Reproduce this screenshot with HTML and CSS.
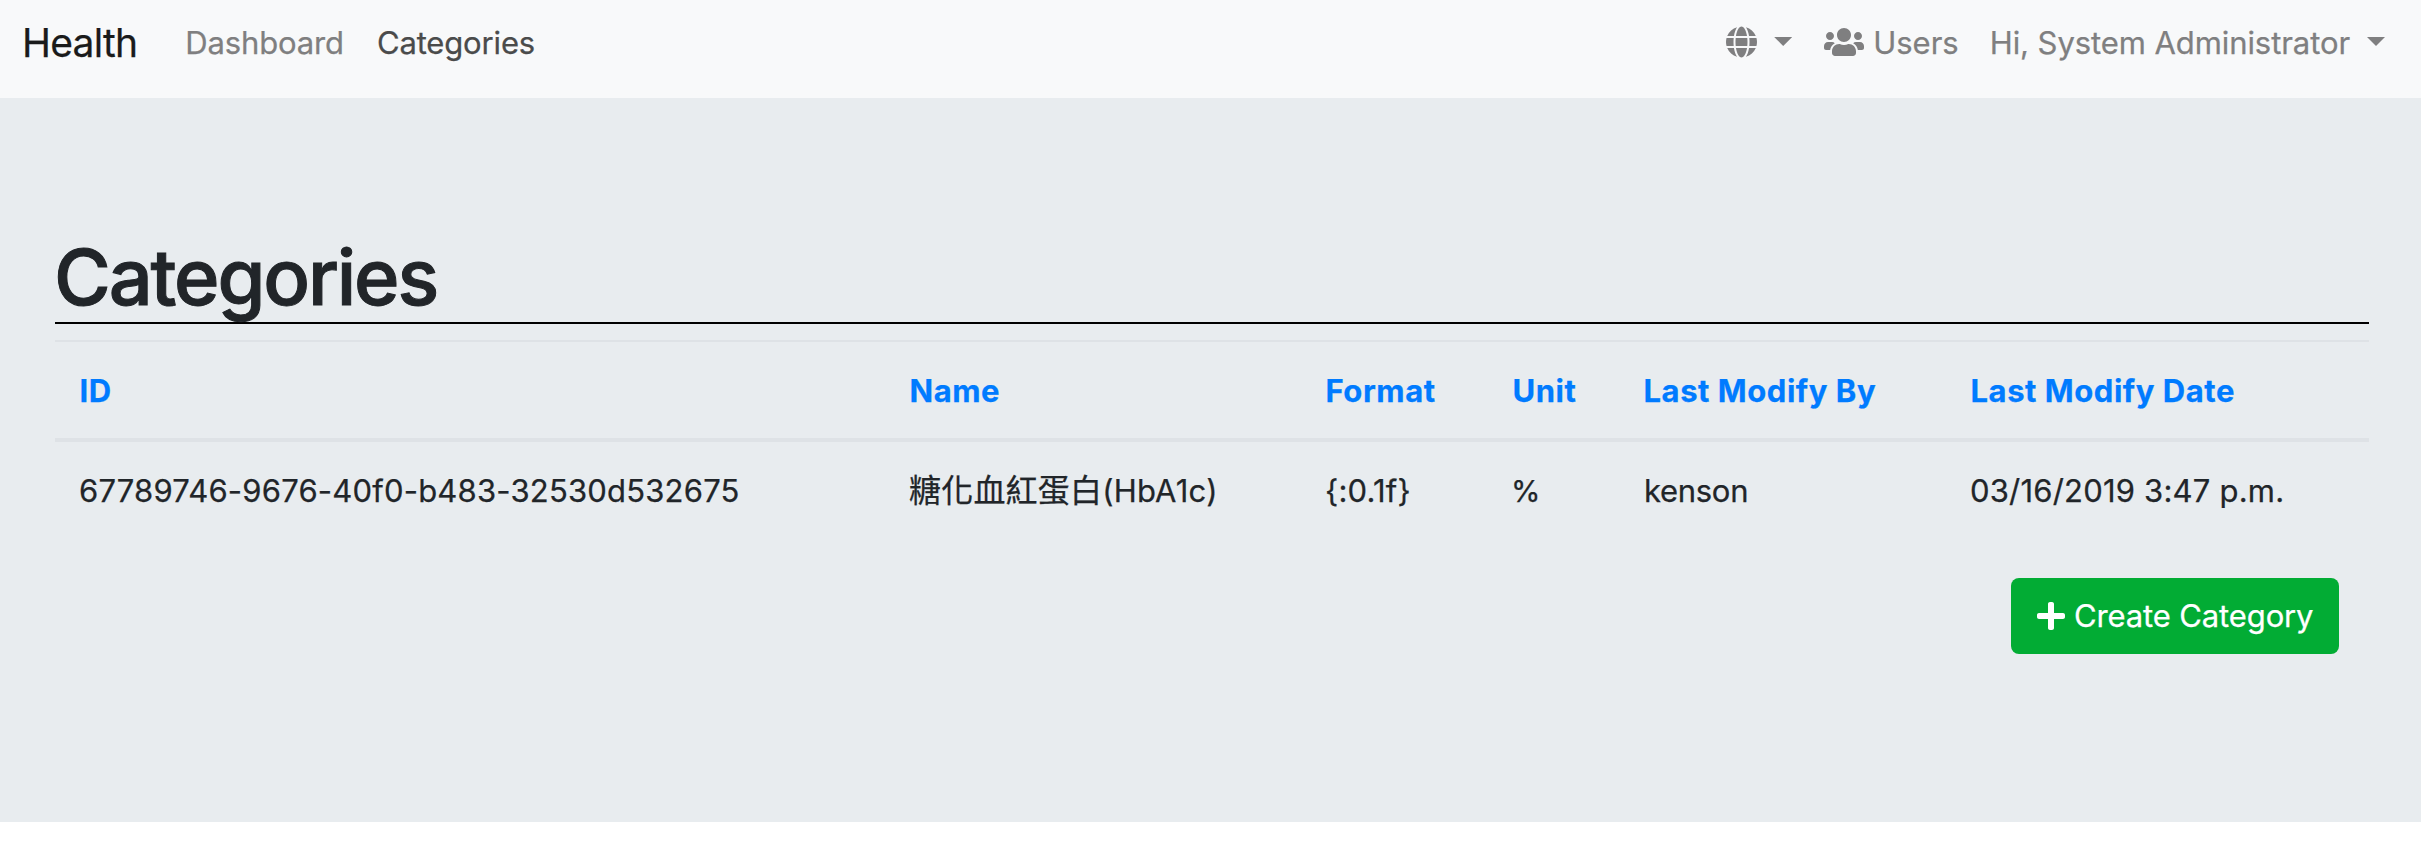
FILE: index.html
```html
<!DOCTYPE html>
<html lang="en">
<head>
<meta charset="utf-8">
<title>Health</title>
<link rel="stylesheet" href="styles.css">
</head>
<body>
<nav class="navbar">
  <a class="brand">Health</a>
  <a class="nav-link dashboard">Dashboard</a>
  <a class="nav-link active">Categories</a>
  <div class="nav-right">
    <a class="nav-link lang">
      <svg class="globe" viewBox="0 0 496 512"><path d="M336.500 160C322 70.700 287.800 8 248 8s-74 62.700-88.500 152h177zM152 256c0 22.200 1.200 43.500 3.300 64h185.300c2.100-20.500 3.300-41.800 3.300-64s-1.200-43.500-3.300-64H155.300c-2.100 20.500-3.300 41.800-3.300 64zm324.700-96c-28.600-67.900-86.500-120.400-158-141.600 24.400 33.800 41.200 84.700 50 141.600h108zM177.200 18.400C105.800 39.600 47.800 92.100 19.300 160h108c8.700-56.900 25.500-107.800 49.900-141.600zM487.400 192H372.700c2.100 21 3.300 42.500 3.300 64s-1.200 43-3.300 64h114.600c5.500-20.500 8.600-41.800 8.600-64s-3.100-43.500-8.500-64zM120 256c0-21.500 1.200-43 3.300-64H8.600C3.200 212.500 0 233.800 0 256s3.200 43.500 8.600 64h114.600c-2-21-3.200-42.500-3.200-64zm39.500 96c14.500 89.300 48.700 152 88.500 152s74-62.700 88.500-152h-177zm159.300 141.600c71.400-21.200 129.400-73.700 158-141.600h-108c-8.800 56.900-25.600 107.800-50 141.600zM19.300 352c28.600 67.900 86.500 120.400 158 141.600-24.400-33.800-41.200-84.700-50-141.600h-108z"/></svg>
      <i class="caret"></i>
    </a>
    <a class="nav-link users">
      <svg class="people" viewBox="0 0 640 512"><path d="M96 224c35.300 0 64-28.700 64-64s-28.700-64-64-64-64 28.700-64 64 28.700 64 64 64zm448 0c35.300 0 64-28.700 64-64s-28.700-64-64-64-64 28.700-64 64 28.700 64 64 64zm32 32h-64c-17.600 0-33.500 7.100-45.100 18.600 40.300 22.100 68.900 62 75.100 109.400h66c17.700 0 32-14.300 32-32v-32c0-35.300-28.700-64-64-64zm-256 0c61.900 0 112-50.100 112-112S381.900 32 320 32 208 82.100 208 144s50.100 112 112 112zm76.800 32h-8.300c-20.800 10-43.900 16-68.500 16s-47.600-6-68.500-16h-8.300C179.600 288 128 339.600 128 403.200V432c0 26.500 21.500 48 48 48h288c26.500 0 48-21.500 48-48v-28.800c0-63.600-51.600-115.200-115.200-115.200zm-223.700-13.400C161.500 263.100 145.600 256 128 256H64c-35.300 0-64 28.700-64 64v32c0 17.700 14.300 32 32 32h65.900c6.300-47.400 34.900-87.300 75.200-109.400z"/></svg>
      <span>Users</span>
    </a>
    <a class="nav-link account"><span class="greeting">Hi, System Administrator</span><i class="caret"></i></a>
  </div>
</nav>
<main class="page">
  <h1 class="title">Categories</h1>
  <table class="table">
    <colgroup><col class="c-id"><col class="c-name"><col class="c-format"><col class="c-unit"><col class="c-by"><col class="c-date"></colgroup>
    <thead><tr><th>ID</th><th>Name</th><th>Format</th><th>Unit</th><th>Last Modify By</th><th>Last Modify Date</th></tr></thead>
    <tbody><tr><td>67789746-9676-40f0-b483-32530d532675</td><td><span class="cjk" lang="zh-Hant">糖化血紅蛋白</span>(HbA1c)</td><td>{:0.1f}</td><td class="unit">%</td><td class="user">kenson</td><td>03/16/2019 3:47 p.m.</td></tr></tbody>
  </table>
  <div class="actions">
    <a class="btn">
      <svg class="plus" viewBox="0 0 448 512"><path d="M416 208H272V64c0-17.700-14.300-32-32-32h-32c-17.700 0-32 14.300-32 32v144H32c-17.700 0-32 14.300-32 32v32c0 17.700 14.300 32 32 32h144v144c0 17.700 14.300 32 32 32h32c17.700 0 32-14.300 32-32V304h144c17.700 0 32-14.300 32-32v-32c0-17.700-14.300-32-32-32z"/></svg>
      <span>Create Category</span>
    </a>
  </div>
</main>
</body>
</html>
```
FILE: styles.css
```css
* { box-sizing: border-box; }
body { margin: 0; background: #fff; color: #212529; font: 31px/48px Inter, "Noto Sans CJK TC", sans-serif; -webkit-text-stroke: 0.25px currentColor; }
svg { display: block; fill: currentColor; flex: none; }
.navbar { display: flex; align-items: flex-start; height: 98px; padding: 19px 36px 0 22px; background: #f8f9fa; white-space: nowrap; }
.brand { margin-right: 48px; font-size: 39px; letter-spacing: -0.75px; color: #1a1b1b; }
.nav-link { display: flex; color: #7f7f80; }
.dashboard { margin-right: 33px; letter-spacing: -0.15px; }
.active { color: #4a4b4b; letter-spacing: -0.15px; }
.nav-right { display: flex; margin-left: auto; }
.caret { width: 18px; height: 9px; margin-top: 18px; background: currentColor; clip-path: polygon(0 0, 100% 0, 50% 100%); }
.globe { width: 31px; height: 32px; margin: 7px 17px 0 0; }
.lang { margin-right: 32px; }
.people { width: 40px; height: 32px; margin: 7px 9px 0 0; }
.users { margin-right: 31px; }
.account { gap: 17px; }
.greeting { letter-spacing: -0.08px; }
.page { height: 724px; padding: 135px 52px 0 55px; background: #e8ecef; }
.title { height: 91px; margin: 0 0 16px; border-bottom: 2px solid #000; font-size: 77.500px; line-height: 88px; font-weight: 500; letter-spacing: -2.150px; text-indent: -1px; -webkit-text-stroke: 1px currentColor; }
.table { width: 2314px; table-layout: fixed; border-collapse: separate; border-spacing: 0; text-align: left; white-space: nowrap; }
.c-id { width: 830px; }
.c-name { width: 416px; }
.c-format { width: 187px; }
.c-unit { width: 131px; }
.c-by { width: 327px; }
.c-date { width: 423px; }
th, td { height: 48px; padding: 25px 0 23px 24px; font-weight: 400; letter-spacing: 0.2px; }
th { border-top: 2px solid #dee2e6; border-bottom: 4px solid #dee2e6; color: #007bff; font-weight: 700; letter-spacing: 0.550px; text-indent: 0.5px; }
.cjk { font-size: 32px; line-height: 1; }
.unit { padding-left: 23px; font-size: 30px; }
.user { padding-left: 25px; letter-spacing: -0.3px; }
.actions { display: flex; justify-content: flex-end; margin-top: 40px; padding-right: 30px; }
.btn { display: flex; width: 328px; height: 76px; padding: 14px 0 0 26px; border-radius: 8px; background: #02ac34; color: #fff; letter-spacing: -0.13px; white-space: nowrap; }
.plus { width: 28px; height: 32px; margin: 8px 9px 0 0; }
```
